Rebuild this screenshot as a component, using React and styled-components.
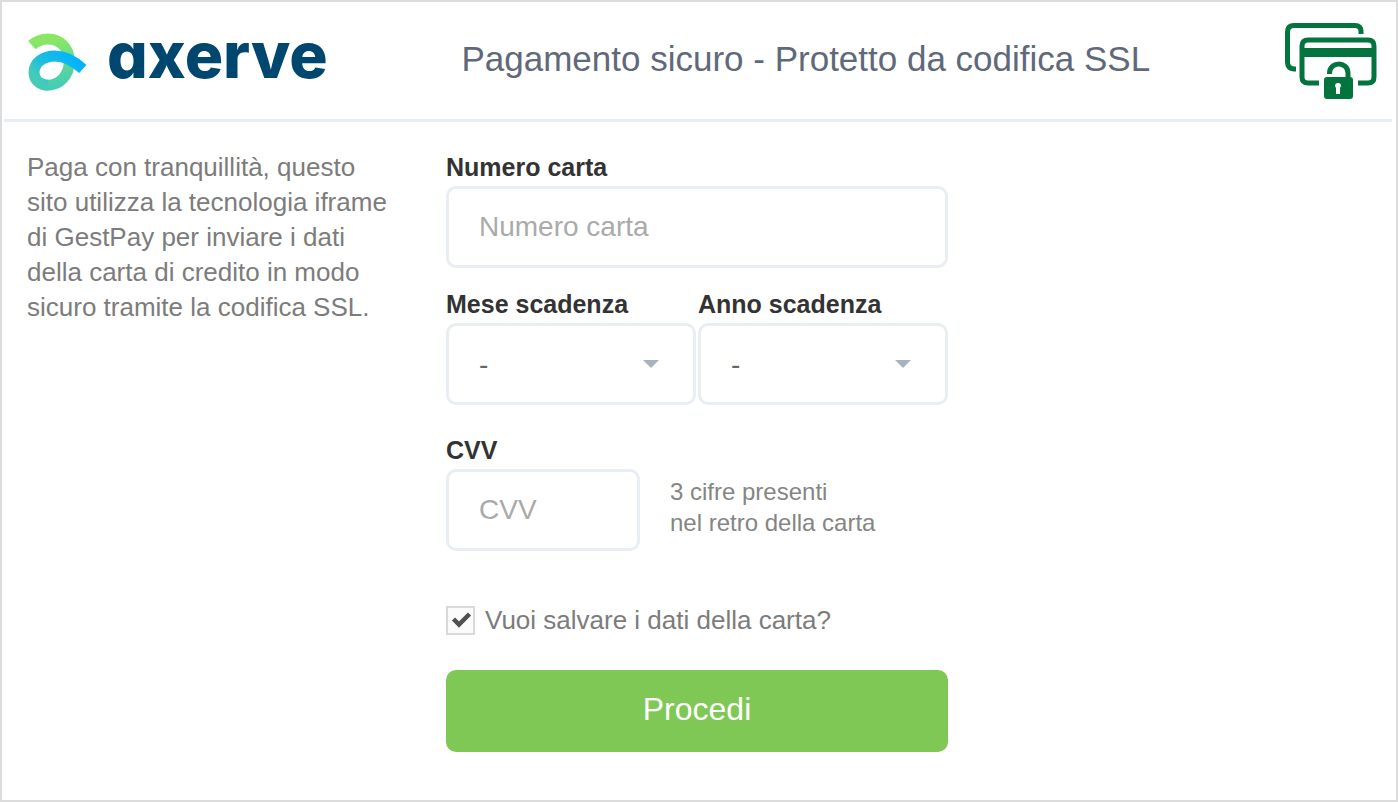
import { useState } from "react";
import styled, { createGlobalStyle } from "styled-components";

const GlobalStyle = createGlobalStyle`
    * {
        box-sizing: border-box;
    }

    body {
        margin: 0;
        background: #fff;
        font-family: "Liberation Sans", Arial, sans-serif;
    }
`;

const Container = styled.div`
    min-height: 100vh;
    border: 2px solid #dcdcdc;
    background: #fff;
`;

const Header = styled.header`
    display: flex;
    align-items: center;
    justify-content: space-between;
    height: 120px;
    margin: 0 4px 0 2px;
    padding: 0 14px 0 23px;
    border-bottom: 3px solid #e9eef3;
`;

const Brand = styled.a`
    display: flex;
    align-items: center;
    gap: 20px;
    color: #00476f;
    text-decoration: none;
`;

const BrandName = styled.span`
    padding-bottom: 12px;
    font-family: Inter, Lato, sans-serif;
    font-size: 64px;
    font-weight: 800;
    line-height: 64px;
    font-feature-settings: "cv11" 1;
`;

const Title = styled.h1`
    margin: 0;
    padding-bottom: 4px;
    color: #5f697a;
    font-size: 35px;
    font-weight: 400;
    line-height: 40px;
`;

const Content = styled.main`
    display: grid;
    grid-template-columns: 419fr 502fr 448fr;
    padding: 28px 0 48px 25px;
`;

const Intro = styled.p`
    margin: 0;
    padding-right: 50px;
    color: #7c7c7c;
    font-size: 26px;
    line-height: 35px;
`;

const Form = styled.form`
    display: flex;
    flex-direction: column;
`;

const FieldRow = styled.div`
    display: grid;
    grid-template-columns: ${props => props.$columns || '1fr'};
    gap: 2px;
    margin-bottom: ${props => props.$space || '19px'};
`;

const Field = styled.div`
    min-width: 0;
`;

const Label = styled.label`
    display: block;
    padding-bottom: 2px;
    color: #333;
    font-size: 25px;
    font-weight: 700;
    line-height: 34px;
`;

const Input = styled.input`
    display: block;
    width: ${props => props.$width || '100%'};
    height: 82px;
    padding: 0 30px;
    border: 3px solid #e8eef3;
    border-radius: 10px;
    background: #fff;
    color: #666;
    font-family: inherit;
    font-size: 28px;

    &::placeholder {
        color: #aaa;
        opacity: 1;
    }

    &:focus {
        outline: none;
        border-color: #7fc955;
    }
`;

const SelectBox = styled.div`
    position: relative;

    &::after {
        content: "";
        position: absolute;
        top: 37px;
        right: 37px;
        border: 8px solid transparent;
        border-top-color: #a9b3bd;
        border-bottom: 0;
        pointer-events: none;
    }
`;

const Select = styled.select`
    display: block;
    width: 100%;
    height: 82px;
    padding: 0 30px;
    border: 3px solid #e8eef3;
    border-radius: 10px;
    background: #fff;
    color: #666;
    font-family: inherit;
    font-size: 28px;
    appearance: none;

    &:focus {
        outline: none;
        border-color: #7fc955;
    }
`;

const CvvLine = styled.div`
    display: flex;
    align-items: center;
    gap: 30px;
`;

const Hint = styled.p`
    margin: 0;
    padding-bottom: 6px;
    color: #858585;
    font-size: 24px;
    line-height: 31px;
    white-space: nowrap;
`;

const SaveLabel = styled.label`
    display: flex;
    align-items: center;
    gap: 10px;
    margin-bottom: 32px;
    color: #7c7c7c;
    font-size: 26px;
    line-height: 36px;
    white-space: nowrap;
`;

const CheckBox = styled.span`
    position: relative;
    width: 29px;
    height: 29px;

    input {
        display: block;
        width: 100%;
        height: 100%;
        margin: 0;
        border: 2px solid #d9d9d9;
        background: #fbfbfb;
        appearance: none;
    }

    svg {
        position: absolute;
        top: 0;
        left: 0;
        visibility: hidden;
        pointer-events: none;
    }

    input:checked + svg {
        visibility: visible;
    }
`;

const SubmitButton = styled.button`
    height: 82px;
    padding: 0 0 4px;
    border: 0;
    border-radius: 10px;
    background: #7fc855;
    color: #fff;
    font-family: inherit;
    font-size: 32px;
    cursor: pointer;
`;

const BrandMark = () => (
    <svg width="60" height="60" viewBox="0 0 60 60" fill="none" aria-hidden="true">
        <defs>
            <linearGradient id="markBack" x1="20" y1="2" x2="28" y2="58" gradientUnits="userSpaceOnUse">
                <stop offset="0.15" stopColor="#8ae766" />
                <stop offset="0.6" stopColor="#5dd896" />
                <stop offset="1" stopColor="#43cbb8" />
            </linearGradient>
            <linearGradient id="markFront" x1="20" y1="56" x2="50" y2="26" gradientUnits="userSpaceOnUse">
                <stop offset="0" stopColor="#43cbb8" />
                <stop offset="0.3" stopColor="#20c0dc" />
                <stop offset="1" stopColor="#00b2ff" />
            </linearGradient>
        </defs>
        <path d="M4.800 14.200C9.500 10 15 8 21 8C33 8 42.300 17 42.300 30C42.300 44 33 54.200 20.500 54.200" stroke="url(#markBack)" strokeWidth="11" />
        <path d="M21 54.200C13 54.200 7 49 7 41.500C7 32 16 25 28 25C38.500 25 47 30 55.800 38" stroke="url(#markFront)" strokeWidth="11" />
    </svg>
);

const SecureCardsIcon = () => (
    <svg width="94" height="78" viewBox="0 0 94 78" fill="none" role="img" aria-label="Pagamento sicuro">
        <g stroke="#04743e" strokeWidth="5">
            <path d="M77 12V9.500Q77 3.500 71 3.500H10Q3.500 3.500 3.500 10V40Q3.500 46.500 10 47H12" />
            <path d="M35 61H24Q18 61 18 55V24Q18 18 24 18H84Q90 18 90 24V55Q90 61 84 61H74" />
            <path d="M45.500 52C45 39 64 39 64 51V58" />
        </g>
        <path d="M18 26H90V35H18Z" fill="#04743e" />
        <rect x="40" y="55" width="29" height="22" rx="3" fill="#04743e" />
        <path d="M51 64a3 3 0 1 1 6 0l-1 2v6h-4v-6z" fill="#fff" />
    </svg>
);

const MONTHS = ['01', '02', '03', '04', '05', '06', '07', '08', '09', '10', '11', '12'];
const YEARS = ['2024', '2025', '2026', '2027', '2028', '2029', '2030'];

const SelectField = ({ id, label, options }) => {
    return (
        <Field>
            <Label htmlFor={id}>{label}</Label>
            <SelectBox>
                <Select id={id} name={id} defaultValue=''>
                    <option value=''>-</option>
                    {options.map(r => <option key={r} value={r}>{r}</option>)}
                </Select>
            </SelectBox>
        </Field>
    );
}

const App = () => {
    const [saveCard, setSaveCard] = useState(true);

    return (
        <>
            <GlobalStyle />
            <Container>
                <Header>
                    <Brand href='#'>
                        <BrandMark />
                        <BrandName>axerve</BrandName>
                    </Brand>
                    <Title>Pagamento sicuro - Protetto da codifica SSL</Title>
                    <SecureCardsIcon />
                </Header>
                <Content>
                    <Intro>
                        Paga con tranquillità, questo sito utilizza la tecnologia iframe di GestPay per inviare i dati della carta di credito in modo sicuro tramite la codifica SSL.
                    </Intro>
                    <Form onSubmit={(e) => e.preventDefault()}>
                        <FieldRow>
                            <Field>
                                <Label htmlFor='cardNumber'>Numero carta</Label>
                                <Input id='cardNumber' type='text' inputMode='numeric' placeholder='Numero carta' />
                            </Field>
                        </FieldRow>
                        <FieldRow $columns='1fr 1fr' $space='28px'>
                            <SelectField id='expMonth' label='Mese scadenza' options={MONTHS} />
                            <SelectField id='expYear' label='Anno scadenza' options={YEARS} />
                        </FieldRow>
                        <FieldRow $space='51px'>
                            <Field>
                                <Label htmlFor='cvv'>CVV</Label>
                                <CvvLine>
                                    <Input id='cvv' type='text' inputMode='numeric' placeholder='CVV' $width='194px' />
                                    <Hint>3 cifre presenti<br />nel retro della carta</Hint>
                                </CvvLine>
                            </Field>
                        </FieldRow>
                        <SaveLabel>
                            <CheckBox>
                                <input type='checkbox' checked={saveCard} onChange={(e) => setSaveCard(e.target.checked)} />
                                <svg width="29" height="29" viewBox="0 0 29 29" fill="none" aria-hidden="true">
                                    <path d="M7.500 13L13 18.500L23.500 8" stroke="#505050" strokeWidth="4.500" />
                                </svg>
                            </CheckBox>
                            Vuoi salvare i dati della carta?
                        </SaveLabel>
                        <SubmitButton type='submit'>Procedi</SubmitButton>
                    </Form>
                </Content>
            </Container>
        </>
    );
}

export default App;
